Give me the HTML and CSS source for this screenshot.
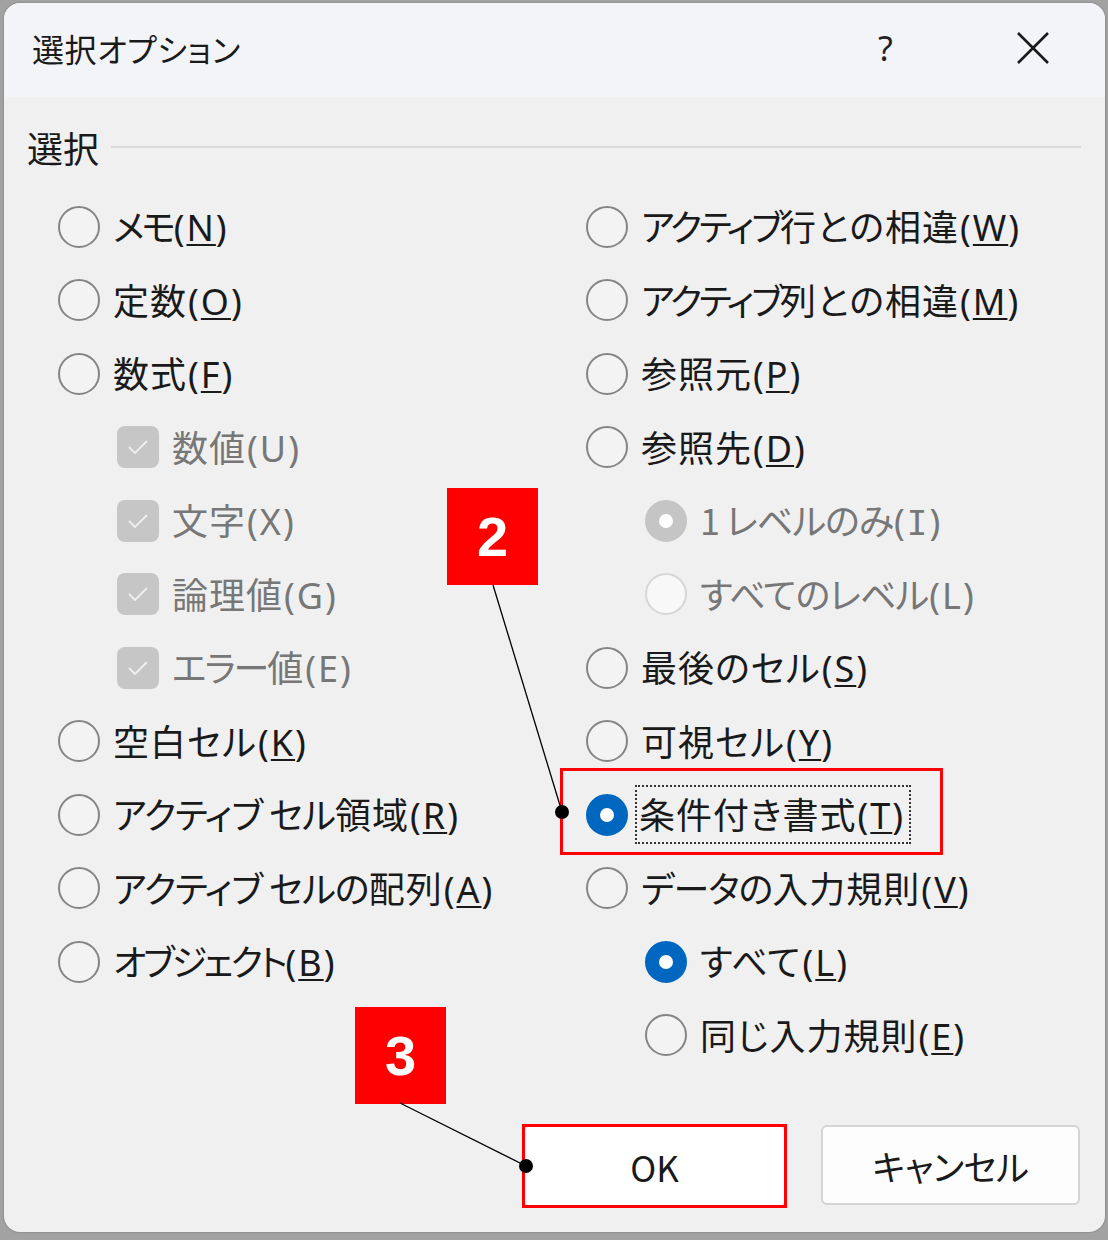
FILE: index.html
```html
<!DOCTYPE html>
<html lang="ja">
<head>
<meta charset="utf-8">
<link rel="stylesheet" href="styles.css">
</head>
<body>
<div class="dialog">
  <div class="titlebar">
    <span class="title">選択オプション</span>
    <span class="help">?</span>
    <span class="close"><svg width="34" height="34" viewBox="0 0 34 34"><path d="M2 2 L32 32 M32 2 L2 32" stroke="#1a1a1a" stroke-width="2.6" fill="none"/></svg></span>
  </div>
  <div class="content">
    <div class="group-head"><span class="group-label">選択</span><span class="group-line"></span></div>
    <div class="grid">
      <div class="col">
        <div class="row"><span class="radio"></span><span class="lbl"><span class="kana-xs">メモ</span><span class="k">(<u>N</u>)</span></span></div>
        <div class="row"><span class="radio"></span><span class="lbl">定数<span class="k">(<u>O</u>)</span></span></div>
        <div class="row"><span class="radio"></span><span class="lbl">数式<span class="k">(<u>F</u>)</span></span></div>
        <div class="row sub disabled"><span class="check"><svg width="22" height="16" viewBox="0 0 22 16"><path d="M2 8 L8 14 L20 2" stroke="#efefef" stroke-width="1.8" fill="none"/></svg></span><span class="lbl">数値<span class="k">(U)</span></span></div>
        <div class="row sub disabled"><span class="check"><svg width="22" height="16" viewBox="0 0 22 16"><path d="M2 8 L8 14 L20 2" stroke="#efefef" stroke-width="1.8" fill="none"/></svg></span><span class="lbl">文字<span class="k">(X)</span></span></div>
        <div class="row sub disabled"><span class="check"><svg width="22" height="16" viewBox="0 0 22 16"><path d="M2 8 L8 14 L20 2" stroke="#efefef" stroke-width="1.8" fill="none"/></svg></span><span class="lbl">論理値<span class="k">(G)</span></span></div>
        <div class="row sub disabled"><span class="check"><svg width="22" height="16" viewBox="0 0 22 16"><path d="M2 8 L8 14 L20 2" stroke="#efefef" stroke-width="1.8" fill="none"/></svg></span><span class="lbl"><span class="kana-s">エラー</span>値<span class="k">(E)</span></span></div>
        <div class="row"><span class="radio"></span><span class="lbl">空白セル<span class="k">(<u>K</u>)</span></span></div>
        <div class="row"><span class="radio"></span><span class="lbl"><span class="kana">アクティブ セル</span>領域<span class="k">(<u>R</u>)</span></span></div>
        <div class="row"><span class="radio"></span><span class="lbl"><span class="kana">アクティブ セルの</span>配列<span class="k">(<u>A</u>)</span></span></div>
        <div class="row"><span class="radio"></span><span class="lbl"><span class="kana-xs">オブジェクト</span><span class="k">(<u>B</u>)</span></span></div>
      </div>
      <div class="col">
        <div class="row"><span class="radio"></span><span class="lbl"><span class="kana-xs">アクティブ</span>行との相違<span class="k">(<u>W</u>)</span></span></div>
        <div class="row"><span class="radio"></span><span class="lbl"><span class="kana-xs">アクティブ</span>列との相違<span class="k">(<u>M</u>)</span></span></div>
        <div class="row"><span class="radio"></span><span class="lbl">参照元<span class="k">(<u>P</u>)</span></span></div>
        <div class="row"><span class="radio"></span><span class="lbl">参照先<span class="k">(<u>D</u>)</span></span></div>
        <div class="row sub disabled"><span class="radio dis-on"></span><span class="lbl"><span class="kana">1 レベルのみ</span><span class="k">(<span class="serif-i">I</span>)</span></span></div>
        <div class="row sub disabled"><span class="radio dis-off"></span><span class="lbl"><span class="kana">すべてのレベル</span><span class="k">(L)</span></span></div>
        <div class="row"><span class="radio"></span><span class="lbl">最後のセル<span class="k">(<u>S</u>)</span></span></div>
        <div class="row"><span class="radio"></span><span class="lbl">可視セル<span class="k">(<u>Y</u>)</span></span></div>
        <div class="row"><span class="radio on"></span><span class="lbl focus">条件付き書式<span class="k">(<u>T</u>)</span></span></div>
        <div class="row"><span class="radio"></span><span class="lbl"><span class="kana">データの</span>入力規則<span class="k">(<u>V</u>)</span></span></div>
        <div class="row sub"><span class="radio on"></span><span class="lbl">すべて<span class="k">(<u>L</u>)</span></span></div>
        <div class="row sub"><span class="radio"></span><span class="lbl">同じ入力規則<span class="k">(<u>E</u>)</span></span></div>
      </div>
    </div>
    <div class="buttons">
      <button class="btn ok">OK</button>
      <button class="btn cancel">キャンセル</button>
    </div>
  </div>
</div>

<div class="redbox box-cond"></div>
<div class="redbox box-ok"></div>
<div class="badge badge-2">2</div>
<div class="badge badge-3">3</div>
<svg class="leaders" width="1108" height="1240" viewBox="0 0 1108 1240">
  <line x1="493" y1="585" x2="562" y2="812" stroke="#000" stroke-width="1.3"/>
  <circle cx="562" cy="812" r="7" fill="#000"/>
  <line x1="400" y1="1103" x2="526" y2="1166" stroke="#000" stroke-width="1.3"/>
  <circle cx="526" cy="1166" r="7" fill="#000"/>
</svg>
</body>
</html>
```

FILE: styles.css
```css
html, body {
  margin: 0;
  padding: 0;
}
body {
  width: 1108px;
  height: 1240px;
  background: #a2a2a2;
  position: relative;
  overflow: hidden;
  font-family: "Noto Sans CJK JP", "Noto Sans", sans-serif;
  font-feature-settings: "palt" 1;
  color: #1a1a1a;
}
.dialog {
  margin: 3px 3px 0 4px;
  width: 1101px;
  height: 1229px;
  border-radius: 16px;
  background: #f0f0f0;
  overflow: hidden;
  display: flex;
  flex-direction: column;
  box-shadow: 0 0 2px rgba(0,0,0,0.35);
}
.titlebar {
  height: 94px;
  flex: none;
  background: #f3f4f8;
  display: flex;
  align-items: center;
  padding-left: 28px;
  padding-bottom: 4px;
  box-sizing: border-box;
}
.title {
  font-size: 32px;
  letter-spacing: 0.6px;
  flex: 1;
}
.help {
  font-size: 34px;
  font-family: "Noto Sans", sans-serif;
  width: 34px;
  margin-right: 104px;
  color: #222;
}
.close {
  display: flex;
  margin-right: 55px;
}
.content {
  flex: 1;
  display: flex;
  flex-direction: column;
  padding: 0 24px 0 23px;
}
.group-head {
  display: flex;
  align-items: center;
  margin-top: 30px;
  height: 40px;
}
.group-label {
  font-size: 36px;
  line-height: 40px;
  margin-right: 12px;
}
.group-line {
  flex: 1;
  height: 2px;
  background: #dadada;
}
.grid {
  display: grid;
  grid-template-columns: 528px 1fr;
  margin-top: 23px;
  padding-left: 31px;
}
.col {
  display: flex;
  flex-direction: column;
}
.row {
  height: 73.5px;
  display: flex;
  align-items: center;
  gap: 13px;
  font-size: 36px;
}
.row.sub {
  padding-left: 59px;
}
.lbl {
  line-height: 44px;
  white-space: nowrap;
  letter-spacing: 1px;
}
.kana {
  letter-spacing: -1px;
}
.kana-s {
  letter-spacing: -2px;
}
.kana-xs {
  letter-spacing: -3px;
}
.k {
  font-family: "Noto Sans", "Noto Sans CJK JP", sans-serif;
  letter-spacing: 2px;
  margin-left: 1px;
}
.serif-i {
  font-family: "DejaVu Sans Mono", monospace;
  font-size: 0.95em;
}
u {
  text-decoration-thickness: 2px;
  text-underline-offset: 3px;
}
.radio {
  width: 42px;
  height: 42px;
  box-sizing: border-box;
  border: 2px solid #858585;
  border-radius: 50%;
  flex: none;
  display: flex;
  align-items: center;
  justify-content: center;
  background: #f3f3f3;
}
.radio.on {
  background: #0067c0;
  border-color: #0067c0;
}
.radio.on::after, .radio.dis-on::after {
  content: "";
  width: 14px;
  height: 14px;
  border-radius: 50%;
  background: #fff;
}
.radio.dis-on {
  background: #c5c5c5;
  border-color: #c5c5c5;
}
.radio.dis-off {
  background: #f8f8f8;
  border-color: #d6d6d6;
}
.check {
  width: 42px;
  height: 42px;
  border-radius: 8px;
  background: #c6c6c6;
  flex: none;
  display: flex;
  align-items: center;
  justify-content: center;
}
.disabled .lbl {
  color: #777777;
}
.focus {
  outline: 2px dotted #333;
  outline-offset: 0;
  padding: 4px 4px 4px 2px;
  margin-left: -4px;
}
.buttons {
  display: flex;
  margin-top: 53px;
  padding-left: 496px;
  gap: 35px;
  align-items: flex-start;
}
.btn {
  font-family: "Noto Sans CJK JP", "Noto Sans", sans-serif;
  font-feature-settings: "palt" 1;
  font-size: 35px;
  color: #1a1a1a;
  background: #fdfdfd;
  border: 2px solid #d4d4d4;
  border-radius: 6px;
  padding: 0;
}
.btn.ok {
  width: 263px;
  height: 82px;
  background: #fff;
}
.btn.cancel {
  width: 259px;
  height: 80px;
  letter-spacing: -0.5px;
}
.redbox {
  position: absolute;
  border: 3px solid #ff0000;
  box-sizing: border-box;
}
.box-cond {
  left: 560px;
  top: 768px;
  width: 383px;
  height: 87px;
}
.box-ok {
  left: 522px;
  top: 1124px;
  width: 265px;
  height: 84px;
}
.badge {
  position: absolute;
  background: #ff0000;
  color: #fff;
  font-family: "Liberation Sans", Arial, sans-serif;
  font-weight: 700;
  font-size: 56px;
  display: flex;
  align-items: center;
  justify-content: center;
  width: 91px;
  height: 97px;
}
.badge-2 {
  left: 447px;
  top: 488px;
}
.badge-3 {
  left: 355px;
  top: 1007px;
}
.leaders {
  position: absolute;
  left: 0;
  top: 0;
}
```
